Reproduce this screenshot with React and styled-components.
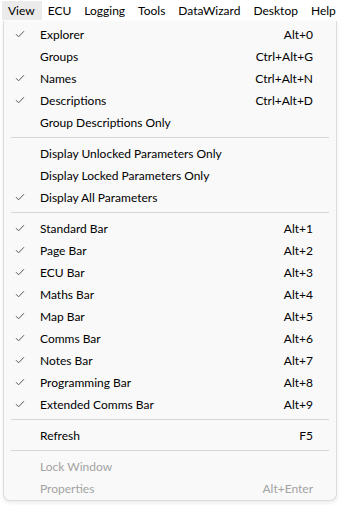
import React from 'react';
import styled, { createGlobalStyle } from 'styled-components';

const Global = createGlobalStyle`
  html, body {
    margin: 0;
    padding: 0;
    background: #ffffff;
  }
  body {
    font-family: 'Segoe UI', Lato, 'Noto Sans', sans-serif;
    font-size: 12px;
    color: #000000;
  }
`;

const Page = styled.div`
  width: 340px;
  height: 505px;
  overflow: hidden;
  background: #ffffff;
`;

const MenuBar = styled.div`
  display: flex;
  align-items: center;
  height: 21px;
  padding-left: 2px;
  background: #ffffff;
`;

const BarItem = styled.div`
  height: 19px;
  line-height: 19px;
  padding: 0 7px 0 6px;
  background: ${(p) => (p.open ? '#ebebeb' : 'transparent')};
  white-space: nowrap;
`;

const Popup = styled.div`
  margin-left: 3px;
  width: 332px;
  padding: 2px 0 1px;
  background: #f9f9f9;
  border: 1px solid #dcdcdc;
  border-top: none;
  border-radius: 0 0 7px 7px;
  box-shadow: 0 2px 4px rgba(0, 0, 0, 0.08);
`;

const Row = styled.div`
  display: flex;
  align-items: center;
  height: 22px;
  color: ${(p) => (p.disabled ? '#a3a3a3' : '#000000')};
`;

const CheckCell = styled.div`
  width: 36px;
  display: flex;
  justify-content: center;
  padding-right: 4px;
  box-sizing: border-box;
`;

const Label = styled.div`
  flex: 1;
  white-space: nowrap;
`;

const Shortcut = styled.div`
  padding-right: 23px;
  white-space: nowrap;
`;

const Separator = styled.div`
  height: 1px;
  margin: 4px 7px 4px 7px;
  background: #d6d6d6;
`;

const Check = () => (
  <svg width="10" height="8" viewBox="0 0 10 8">
    <path d="M1 4.2 L3.6 6.8 L9 1.2" fill="none" stroke="#555" strokeWidth="1" />
  </svg>
);

const menu = [
  ['Explorer', 'Alt+0', true],
  ['Groups', 'Ctrl+Alt+G', false],
  ['Names', 'Ctrl+Alt+N', true],
  ['Descriptions', 'Ctrl+Alt+D', true],
  ['Group Descriptions Only', '', false],
  '-',
  ['Display Unlocked Parameters Only', '', false],
  ['Display Locked Parameters Only', '', false],
  ['Display All Parameters', '', true],
  '-',
  ['Standard Bar', 'Alt+1', true],
  ['Page Bar', 'Alt+2', true],
  ['ECU Bar', 'Alt+3', true],
  ['Maths Bar', 'Alt+4', true],
  ['Map Bar', 'Alt+5', true],
  ['Comms Bar', 'Alt+6', true],
  ['Notes Bar', 'Alt+7', true],
  ['Programming Bar', 'Alt+8', true],
  ['Extended Comms Bar', 'Alt+9', true],
  '-',
  ['Refresh', 'F5', false],
  '-',
  ['Lock Window', '', false, true],
  ['Properties', 'Alt+Enter', false, true],
];

const App = () => (
  <Page>
    <Global />
    <MenuBar>
      <BarItem open>View</BarItem>
      <BarItem>ECU</BarItem>
      <BarItem>Logging</BarItem>
      <BarItem>Tools</BarItem>
      <BarItem>DataWizard</BarItem>
      <BarItem>Desktop</BarItem>
      <BarItem>Help</BarItem>
    </MenuBar>
    <Popup>
      {menu.map((m, i) =>
        m === '-' ? (
          <Separator key={i} />
        ) : (
          <Row key={i} disabled={m[3]}>
            <CheckCell>{m[2] && <Check />}</CheckCell>
            <Label>{m[0]}</Label>
            <Shortcut>{m[1]}</Shortcut>
          </Row>
        )
      )}
    </Popup>
  </Page>
);

export default App;
